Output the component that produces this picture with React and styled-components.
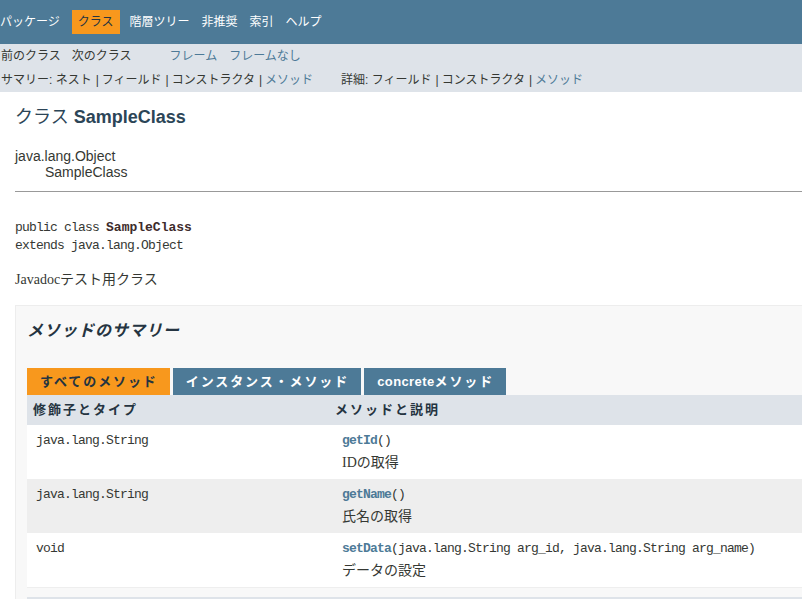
import React from 'react';
import styled, { createGlobalStyle } from 'styled-components';

const JP = `"Liberation Sans", "Noto Sans CJK JP", sans-serif`;
const MONO = `"Liberation Mono", "Noto Sans CJK JP", monospace`;
const SERIF = `"Liberation Serif", "Noto Sans CJK JP", serif`;

const GlobalStyle = createGlobalStyle`
    html, body {
        margin: 0;
        padding: 0;
        overflow: hidden;
        background: #ffffff;
    }
    body {
        font-family: ${JP};
        color: #353833;
        font-size: 14px;
    }
`

// Styled Components
const Page = styled.div`
    width: 1000px;
`

const TopNav = styled.div`
    background-color: #4D7A97;
    height: 44px;
    padding-top: 10px;
    box-sizing: border-box;
`

const NavList = styled.ul`
    display: flex;
    list-style: none;
    margin: 0 0 0 -6px;
    padding: 0;
`

const NavItem = styled.li`
    height: 24px;
    line-height: 24px;
    padding: 0 6px;
    font-size: 12px;
    color: ${p => p.$active ? '#253441' : '#ffffff'};
    background: ${p => p.$active ? '#F8981D' : 'transparent'};
    margin: ${p => p.$active ? '0 4px 0 6px' : '0'};
`

const SubNav = styled.div`
    background-color: #dee3e9;
    height: 48px;
    font-size: 12px;
`

const SubRow = styled.div`
    display: flex;
    height: 24px;
    line-height: 24px;
    padding-left: 1px;
`

const SubItem = styled.span`
    margin-left: ${p => p.$gap || 0}px;
    color: ${p => p.$link ? '#4D7A97' : '#353833'};
    white-space: pre;
`

const Pipe = styled.span`
    margin: 0 3px 0 4px;
    color: #353833;
`

const Content = styled.div`
    padding: 14px 0 0 15px;
`

const Title = styled.h2`
    margin: 0;
    font-size: 18px;
    line-height: 22px;
    font-weight: normal;
    color: #2c4557;

    b {
        font-weight: bold;
    }
`

const Inherit = styled.div`
    margin-top: 20px;
    font-size: 14px;
    line-height: 16px;
`

const Indent = styled.div`
    padding-left: 30px;
`

const Rule = styled.hr`
    margin: 11px 0 0 0;
    border: 0;
    border-top: 1px solid #999999;
    height: 0;
`

const Pre = styled.pre`
    margin: 27px 0 0 0;
    font-family: ${MONO};
    font-size: 13px;
    letter-spacing: -0.8px;
    line-height: 18px;
    color: #353833;

    b {
        color: #3d2b2b;
        letter-spacing: 0;
    }
`

const Block = styled.div`
    margin-top: 16px;
    font-family: ${SERIF};
    font-size: 14px;
    line-height: 18px;
`

const SummaryBox = styled.div`
    margin-top: 16px;
    background: #f8f8f8;
    border: 1px solid #ededed;
    padding: 15px 0 0 11px;
    height: 320px;
`

const SummaryHeading = styled.h3`
    margin: 0;
    font-size: 16px;
    line-height: 20px;
    font-style: italic;
    font-weight: bold;
    letter-spacing: 1px;
    color: #253441;
`

const Tabs = styled.div`
    display: flex;
    gap: 3px;
    margin-top: 27px;
`

const Tab = styled.span`
    height: 27px;
    line-height: 27px;
    padding: 0 12px 0 13px;
    font-size: 13px;
    font-weight: bold;
    letter-spacing: 1.9px;
    color: ${p => p.$active ? '#253441' : '#ffffff'};
    background: ${p => p.$active ? '#F8981D' : '#4D7A97'};

    em {
        font-style: normal;
        letter-spacing: 0.4px;
        font-family: "Liberation Sans", sans-serif;
    }
`

const Table = styled.div`
    display: grid;
    grid-template-columns: 302px 1fr;
    border-bottom: 1px solid #eeeeee;
`

const Head = styled.div`
    height: 30px;
    line-height: 30px;
    background: #dee3e9;
    padding-left: ${p => p.$pad}px;
    font-size: 13px;
    font-weight: bold;
    letter-spacing: 2px;
    color: #253441;
`

const Cell = styled.div`
    background: ${p => p.$alt ? '#eeeeee' : '#ffffff'};
    padding: 5px 0 5px ${p => p.$pad}px;
    line-height: 22px;
    height: 44px;
`

const Code = styled.div`
    font-family: ${MONO};
    font-size: 13px;
    letter-spacing: -0.8px;
    color: #353833;
    white-space: pre;

    b {
        color: #4D7A97;
    }
`

const Desc = styled.div`
    font-family: ${SERIF};
    font-size: 14px;
`

const NextBlock = styled.div`
    margin-top: 9px;
    border-top: 2px solid #dee3e9;
`

const methods = [
    { type: 'java.lang.String', name: 'getId', args: '()', desc: 'IDの取得' },
    { type: 'java.lang.String', name: 'getName', args: '()', desc: '氏名の取得' },
    { type: 'void', name: 'setData', args: '(java.lang.String arg_id, java.lang.String arg_name)', desc: 'データの設定' },
]

const App = () => {
    return (
        <>
            <GlobalStyle />
            <Page>
                <TopNav>
                    <NavList>
                        <NavItem>パッケージ</NavItem>
                        <NavItem $active>クラス</NavItem>
                        <NavItem>階層ツリー</NavItem>
                        <NavItem>非推奨</NavItem>
                        <NavItem>索引</NavItem>
                        <NavItem>ヘルプ</NavItem>
                    </NavList>
                </TopNav>
                <SubNav>
                    <SubRow>
                        <SubItem>前のクラス</SubItem>
                        <SubItem $gap={11}>次のクラス</SubItem>
                        <SubItem $gap={38} $link>フレーム</SubItem>
                        <SubItem $gap={12} $link>フレームなし</SubItem>
                    </SubRow>
                    <SubRow>
                        <SubItem>サマリー: ネスト<Pipe>|</Pipe>フィールド<Pipe>|</Pipe>コンストラクタ<Pipe>|</Pipe></SubItem>
                        <SubItem $link>メソッド</SubItem>
                        <SubItem $gap={28}>詳細: フィールド<Pipe>|</Pipe>コンストラクタ<Pipe>|</Pipe></SubItem>
                        <SubItem $link>メソッド</SubItem>
                    </SubRow>
                </SubNav>
                <Content>
                    <Title>クラス <b>SampleClass</b></Title>
                    <Inherit>
                        <div>java.lang.Object</div>
                        <Indent>SampleClass</Indent>
                    </Inherit>
                    <Rule />
                    <Pre>public class <b>SampleClass</b>{'\n'}extends java.lang.Object</Pre>
                    <Block>Javadocテスト用クラス</Block>
                    <SummaryBox>
                        <SummaryHeading>メソッドのサマリー</SummaryHeading>
                        <Tabs>
                            <Tab $active>すべてのメソッド</Tab>
                            <Tab>インスタンス・メソッド</Tab>
                            <Tab><em>concrete</em>メソッド</Tab>
                        </Tabs>
                        <Table>
                            <Head $pad={6}>修飾子とタイプ</Head>
                            <Head $pad={6}>メソッドと説明</Head>
                            {methods.map((m, i) => (
                                <React.Fragment key={m.name}>
                                    <Cell $alt={i % 2 === 1} $pad={9}>
                                        <Code>{m.type}</Code>
                                    </Cell>
                                    <Cell $alt={i % 2 === 1} $pad={13}>
                                        <Code><b>{m.name}</b>{m.args}</Code>
                                        <Desc>{m.desc}</Desc>
                                    </Cell>
                                </React.Fragment>
                            ))}
                        </Table>
                        <NextBlock />
                    </SummaryBox>
                </Content>
            </Page>
        </>
    )
}

export default App
